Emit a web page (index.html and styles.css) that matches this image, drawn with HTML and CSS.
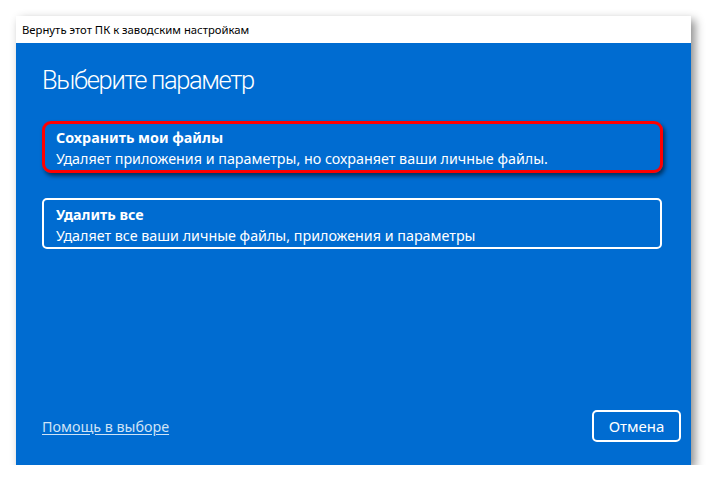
FILE: index.html
```html
<!DOCTYPE html>
<html lang="ru">
<head>
<meta charset="utf-8">
<title>Вернуть этот ПК к заводским настройкам</title>
<link rel="stylesheet" href="styles.css">
</head>
<body>
<div class="window">
  <div class="titlebar">Вернуть этот ПК к заводским настройкам</div>
  <div class="content">
    <h1 class="heading">Выберите параметр</h1>
    <div class="options">
      <div class="option option-highlight">
        <div class="option-title">Сохранить мои файлы</div>
        <div class="option-desc">Удаляет приложения и параметры, но сохраняет ваши личные файлы.</div>
      </div>
      <div class="option">
        <div class="option-title">Удалить все</div>
        <div class="option-desc">Удаляет все ваши личные файлы, приложения и параметры</div>
      </div>
    </div>
    <div class="footer">
      <a class="help-link" href="#">Помощь в выборе</a>
      <button class="cancel-btn" type="button">Отмена</button>
    </div>
  </div>
</div>
</body>
</html>
```
FILE: styles.css
```css
html, body {
  margin: 0;
  padding: 0;
  background: #ffffff;
}
body {
  font-family: "Noto Sans", "Open Sans", sans-serif;
}
.window {
  margin: 16px 0 0 16px;
  width: 675px;
  height: 449px;
  display: flex;
  flex-direction: column;
  box-shadow: 4px 4px 9px rgba(0, 0, 0, 0.45);
}
.titlebar {
  height: 27px;
  flex: none;
  background: #ffffff;
  color: #000000;
  font-size: 11.3px;
  line-height: 27px;
  padding-left: 6px;
  box-sizing: border-box;
}
.content {
  flex: 1;
  background: #006cd1;
  color: #ffffff;
  display: flex;
  flex-direction: column;
  padding: 0 29px 23px 26px;
}
.heading {
  margin: 20px 0 0 0;
  font-family: Roboto, "Open Sans", sans-serif;
  font-weight: 300;
  font-size: 25.5px;
  letter-spacing: -1.35px;
  line-height: 34px;
}
.options {
  margin-top: 24px;
  display: flex;
  flex-direction: column;
  gap: 25px;
}
.option {
  border: 2px solid #ffffff;
  border-radius: 5px;
  padding: 4px 12px 1px 12px;
  font-size: 14.3px;
  line-height: 21px;
}
.option-highlight {
  border: 3px solid #ff0000;
  border-radius: 9px;
  padding: 3px 11px 1px 11px;
  margin-right: -1px;
  box-shadow: 2px 3px 4px rgba(0, 0, 0, 0.55);
}
.option-title {
  font-weight: 700;
}
.footer {
  margin-top: auto;
  margin-right: -19px;
  display: flex;
  align-items: center;
  justify-content: space-between;
}
.help-link {
  color: #cfe3f6;
  font-size: 14.3px;
  text-decoration: underline;
  text-underline-offset: 2px;
}
.cancel-btn {
  width: 89px;
  height: 32px;
  border: 2px solid #ffffff;
  border-radius: 5px;
  background: transparent;
  color: #ffffff;
  font-family: "Noto Sans", "Open Sans", sans-serif;
  font-size: 15px;
  padding: 0;
}
```
